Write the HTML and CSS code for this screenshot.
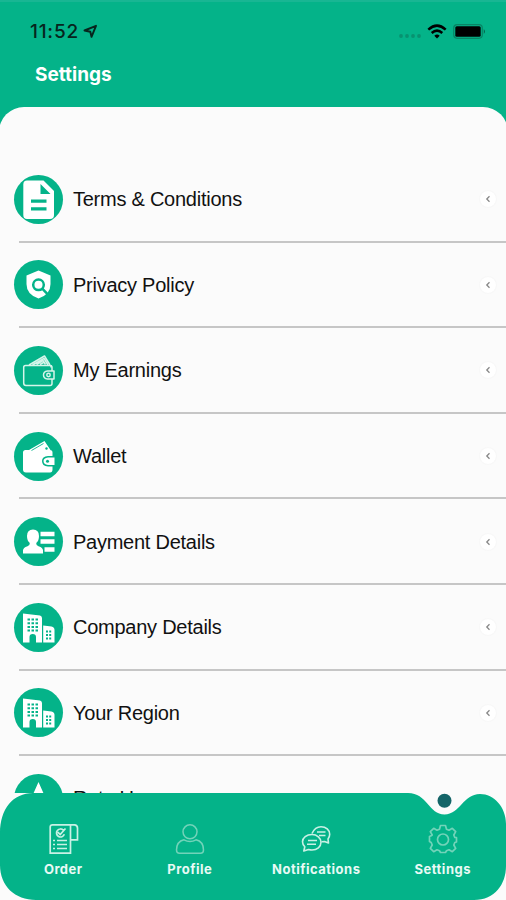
FILE: index.html
```html
<!DOCTYPE html>
<html lang="en">
<head>
    <meta charset="UTF-8">
    <meta name="viewport" content="width=device-width, initial-scale=1.0">
    <title>Settings</title>
    <link rel="stylesheet" href="styles.css">
</head>
<body>
    <!-- shared icons -->
    <svg class="defs" width="0" height="0">
        <symbol id="buildings" viewBox="0 0 49 49">
            <path fill="#fff" d="M9 10.500L26 12.500Q28 13 28 15V39.500H22V34Q22 31 18.700 31Q15.500 31 15.500 34V39.500H9Z"/>
            <path fill="#fff" d="M29.200 22.500L37.500 23.500Q40.500 24 40.500 27V39.500H29.200Z"/>
            <path stroke="#04b389" stroke-width="2" stroke-dasharray="2.500 1.500" d="M13.500 16.500H24M13.500 20.200H24M13.500 23.900H24M13.500 27.600H24"/>
            <path stroke="#04b389" stroke-width="1.800" stroke-dasharray="2 1.200" d="M32 28.500H37.500M32 32H37.500M32 35.500H37.500"/>
        </symbol>
    </svg>

    <div class="screen">
        <header class="header">
            <div class="status-bar">
                <span class="time">11:52</span>
                <svg class="location" width="15" height="15" viewBox="0 0 15 15">
                    <path d="M1.500 6.500L13 1.800L8.500 12.800L7.300 7.800Z" fill="none" stroke="#07251d" stroke-width="1.900" stroke-linejoin="round"/>
                </svg>
                <svg class="signal" width="24" height="6" viewBox="0 0 24 6" fill="#089270">
                    <circle cx="3" cy="3" r="1.900"/><circle cx="9" cy="3" r="1.900"/><circle cx="15" cy="3" r="1.900"/><circle cx="21" cy="3" r="1.900"/>
                </svg>
                <svg class="wifi" width="20" height="15" viewBox="0 0 20 15" fill="none" stroke="#000" stroke-width="2.500">
                    <path d="M1.300 5.600Q10 -2.400 18.700 5.600M4.700 9Q10 4.300 15.300 9"/>
                    <path d="M10 14.500L7.300 11.700Q10 9.300 12.700 11.700Z" fill="#000" stroke="none"/>
                </svg>
                <svg class="battery" width="33" height="15" viewBox="0 0 33 15">
                    <rect x="0.700" y="0.700" width="28.600" height="13.600" rx="3.500" fill="none" stroke="#088565" stroke-width="1.200"/>
                    <rect x="2.300" y="2.300" width="25.400" height="10.400" rx="1.500"/>
                    <path d="M30.800 5Q33 7.500 30.800 10Z" fill="#075f4a"/>
                </svg>
            </div>
            <h1>Settings</h1>
        </header>

        <main class="panel">
            <ul class="menu">
                <li class="menu-item">
                    <span class="icon">
                        <svg viewBox="0 0 49 49">
                            <path fill="#fff" d="M13 5.500H29.500L40 16V40Q40 44 36 44H13Q9.300 44 9.300 40V9.500Q9.300 5.500 13 5.500Z"/>
                            <path fill="#04b389" d="M26.500 9L36.500 19H26.500ZM17 24.500H32.500V27.700H17ZM17 32.200H32.500V35.500H17Z"/>
                        </svg>
                    </span>
                    <span class="label">Terms &amp; Conditions</span>
                    <span class="arrow"><svg viewBox="0 0 6 8"><path d="M4.500 1.300L1.800 4L4.500 6.700"/></svg></span>
                </li>
                <li class="menu-item">
                    <span class="icon">
                        <svg viewBox="0 0 49 49">
                            <path fill="#fff" d="M24.500 10.500L36.500 15.500V24Q36.500 34.500 24.500 38.500Q12.500 34.500 12.500 24V15.500Z"/>
                            <circle cx="24.500" cy="24.800" r="5.300" fill="none" stroke="#04b389" stroke-width="2.500"/>
                            <path d="M28.300 28.600L34 34.600" stroke="#04b389" stroke-width="2.500"/>
                        </svg>
                    </span>
                    <span class="label">Privacy Policy</span>
                    <span class="arrow"><svg viewBox="0 0 6 8"><path d="M4.500 1.300L1.800 4L4.500 6.700"/></svg></span>
                </li>
                <li class="menu-item">
                    <span class="icon">
                        <svg viewBox="0 0 49 49" fill="none" stroke="#d5f5ea" stroke-width="1.500" stroke-linejoin="round">
                            <path d="M38 25V21.500Q38 19.500 36 19.500H11.500Q9.700 19.500 9.700 21.500V37Q9.700 39.500 12 39.500H36Q38 39.500 38 37.500V33"/>
                            <path d="M40 25H33.500Q29.500 25.500 29.500 29Q29.500 32.500 33.500 33H40ZM37 21.500V19"/>
                            <circle cx="34.500" cy="29" r="1.700"/>
                            <path d="M15 19L30.500 10L36 19M18.500 19L30 12.500L34 19M22.500 18.500L29 14.500L31.500 18.500M26 18.500L29.500 16.500"/>
                        </svg>
                    </span>
                    <span class="label">My Earnings</span>
                    <span class="arrow"><svg viewBox="0 0 6 8"><path d="M4.500 1.300L1.800 4L4.500 6.700"/></svg></span>
                </li>
                <li class="menu-item">
                    <span class="icon">
                        <svg viewBox="0 0 49 49" fill="#fff">
                            <path d="M11.500 18H36Q38.500 18 38.500 20.500V24H34Q28 24.500 28 29Q28 34 34 34.500H38.500V37.500Q38.500 40.500 36 40.500H12Q9 40.500 9 37.500V20.500Q9 18 11.500 18Z"/>
                            <path d="M15 18L30.500 9L36.500 18ZM34 25.500H40.500V33H34Q29.500 32.500 29.500 29Q29.500 26 34 25.500Z"/>
                            <g fill="#04b389"><circle cx="33.500" cy="29.200" r="1.500"/><circle cx="32.500" cy="16.500" r="1.200"/></g>
                            <path d="M17.500 18.500L29.500 11.500" stroke="#04b389" stroke-width="0.900"/>
                        </svg>
                    </span>
                    <span class="label">Wallet</span>
                    <span class="arrow"><svg viewBox="0 0 6 8"><path d="M4.500 1.300L1.800 4L4.500 6.700"/></svg></span>
                </li>
                <li class="menu-item">
                    <span class="icon">
                        <svg viewBox="0 0 49 49" fill="#fff">
                            <path d="M19 12.500Q25 12.500 25 19Q25 24 22.200 26Q22 28.500 24.500 29.200Q29 30.500 29 33.500V36.500H9V33.500Q9 30.500 13.500 29.200Q16 28.500 15.800 26Q13 24 13 19Q13 12.500 19 12.500Z"/>
                            <path d="M26.500 14.800H40.500V19.200H26.500ZM26.500 22.300H40.500V26.700H26.500ZM30.500 30.300H40.500V34.700H30.500Z"/>
                        </svg>
                    </span>
                    <span class="label">Payment Details</span>
                    <span class="arrow"><svg viewBox="0 0 6 8"><path d="M4.500 1.300L1.800 4L4.500 6.700"/></svg></span>
                </li>
                <li class="menu-item">
                    <span class="icon"><svg><use href="#buildings"/></svg></span>
                    <span class="label">Company Details</span>
                    <span class="arrow"><svg viewBox="0 0 6 8"><path d="M4.500 1.300L1.800 4L4.500 6.700"/></svg></span>
                </li>
                <li class="menu-item">
                    <span class="icon"><svg><use href="#buildings"/></svg></span>
                    <span class="label">Your Region</span>
                    <span class="arrow"><svg viewBox="0 0 6 8"><path d="M4.500 1.300L1.800 4L4.500 6.700"/></svg></span>
                </li>
                <li class="menu-item">
                    <span class="icon">
                        <svg viewBox="0 0 49 49"><path fill="#fff" d="M24.500 8L29.500 19.200L41 20.200L31.800 28L35 40L24.500 33.300L14 40L17.200 28L8 20.200L19.500 19.200Z"/></svg>
                    </span>
                    <span class="label">Rate Us</span>
                </li>
            </ul>
        </main>

        <nav class="tab-bar">
            <svg class="tab-shape" viewBox="0 0 506 107">
                <path fill="#04b389" d="M33 0H408C427 0 429 21.500 444.500 21.500C460 21.500 463 1 480 1C494 1 506 14 506 31V73C506 91 495 107 474 107H36C15 107 0 93 0 72V40C0 16 13 0 33 0Z"/>
                <circle cx="444.500" cy="7.800" r="7" fill="#146568"/>
            </svg>
            <a class="tab">
                <svg viewBox="0 0 32 32" fill="none" stroke="#c9f1e5" stroke-width="1.700">
                    <path d="M23.500 1.800H5.500Q3.200 1.800 3.200 4V30.200H23.500V1.800H27.500Q30.500 2 30.500 5V16.800H23.500"/>
                    <path d="M6 17.500H8M10 17.500H20M6 21.500H8M10 21.500H20M6 25.500H8M10 25.500H20"/>
                    <path d="M16.500 7.300A4 4 0 1 0 17.300 11.300M10.800 9.200L13.200 11.600L18.500 5.500"/>
                </svg>
                <span>Order</span>
            </a>
            <a class="tab">
                <svg viewBox="0 0 32 32" fill="none" stroke="#72d3b9" stroke-width="1.500">
                    <circle cx="16" cy="8.800" r="7"/>
                    <path d="M10 16.800Q16 20 22 16.800Q29.500 18.500 29.500 27Q29.500 30.300 26.500 30.300H5.500Q2.500 30.300 2.500 27Q2.500 18.500 10 16.800Z"/>
                </svg>
                <span>Profile</span>
            </a>
            <a class="tab">
                <svg viewBox="0 0 32 32" fill="none" stroke="#c9f1e5" stroke-width="1.600" stroke-linejoin="round">
                    <path d="M12 10.500C14 6 17 3.700 21 3.700C26 3.700 29.700 7 29.700 11.300Q29.700 14 28 16L28.500 20L24.500 18.500L21.500 18.800"/>
                    <path d="M12 11.500C17 11.500 21 15 21 19.300C21 23.700 17 27 12 27Q10.500 27 8.500 26.500L3.800 28L4.800 23.800Q2.500 21.500 2.500 18.800C2.500 14.500 6.500 11.500 12 11.500Z"/>
                    <path d="M8 17.500H17M7 21.300H16M17 9H25.500M19 12.500H25.500"/>
                </svg>
                <span>Notifications</span>
            </a>
            <a class="tab active">
                <svg viewBox="0 0 32 32" fill="none" stroke="#72d3b9" stroke-width="1.700" stroke-linejoin="round">
                    <path d="M13.500 2.500H18.500L19.500 6.200L22 7.200L25.300 5.300L28.700 8.700L26.800 12L27.800 14.500H29.500V19L27.800 19.500L26.800 22L28.700 25.300L25.300 28.700L22 26.800L19.500 27.800L18.500 29.500H13.500L12.500 27.800L10 26.800L6.700 28.700L3.300 25.300L5.200 22L4.200 19.500L2.500 18.500V13.500L4.200 12.800L5.200 12L3.300 8.700L6.700 5.300L10 7.200L12.500 6.200Z"/>
                    <circle cx="16" cy="16.500" r="5.500"/>
                </svg>
                <span>Settings</span>
            </a>
        </nav>
    </div>
</body>
</html>
```

FILE: styles.css
```css
* {
    box-sizing: border-box;
}

body {
    margin: 0;
    background: #04b389;
    font-family: "Liberation Sans", Arial, sans-serif;
}

.defs {
    display: block;
}

.screen {
    position: relative;
    height: 900px;
    overflow: hidden;
    display: flex;
    flex-direction: column;
}

.header {
    height: 107px;
    flex-shrink: 0;
    border-top: 2px solid #18b693;
}

.status-bar {
    display: flex;
    align-items: center;
    height: 56px;
    padding: 2px 20px 0 30px;
}

.time {
    width: 50px;
    font-family: Inter, sans-serif;
    font-size: 19px;
    font-weight: 500;
    letter-spacing: 0.8px;
    color: #07251d;
    white-space: nowrap;
}

.location {
    margin-left: 3px;
}

.signal {
    margin: 10px 5px 0 auto;
}

.battery {
    margin-left: 6px;
}

h1 {
    margin: 5px 0 0 35px;
    font-family: Inter, sans-serif;
    font-size: 19px;
    line-height: 23px;
    font-weight: 700;
    color: #fff;
}

.panel {
    flex: 1;
    min-height: 0;
    overflow: hidden;
    margin: 0 -1.500px;
    padding: 50px 1.500px 0;
    background: #fbfbfb;
    border-radius: 25px 25px 0 0;
}

.menu {
    list-style: none;
    margin: 0;
    padding: 0;
}

.menu-item {
    display: flex;
    align-items: center;
    height: 85.600px;
    padding: 0 10px 1px 14px;
    background: linear-gradient(#c6c6c6, #c6c6c6) 19px 100% / 100% 2px no-repeat;
}

.icon {
    width: 49px;
    height: 49px;
    border-radius: 50%;
    background: #04b389;
    overflow: hidden;
}

.icon svg {
    display: block;
    width: 49px;
    height: 49px;
}

.label {
    margin-left: 10px;
    padding-top: 1px;
    font-size: 20px;
    letter-spacing: -0.250px;
    color: #111;
}

.arrow {
    display: flex;
    align-items: center;
    justify-content: center;
    width: 16px;
    height: 16px;
    margin-left: auto;
    border-radius: 50%;
    background: #fff;
    box-shadow: 0 0 2px #eee;
}

.arrow svg {
    width: 6px;
    height: 8px;
    fill: none;
    stroke: #888;
    stroke-width: 1.300;
}

/* bottom bar, stays above the list */
.tab-bar {
    position: absolute;
    left: 0;
    right: 0;
    bottom: 0;
    height: 107px;
    display: grid;
    grid-template-columns: repeat(4, 1fr);
    background: #fbfbfb;
}

.tab-shape {
    position: absolute;
    left: 0;
    top: 0;
    width: 100%;
    height: 107px;
}

.tab {
    position: relative;
    display: flex;
    flex-direction: column;
    align-items: center;
    padding-top: 30px;
    color: #e9faf5;
    font-family: Inter, sans-serif;
    font-size: 13px;
    line-height: 16px;
    font-weight: 700;
    letter-spacing: 0.500px;
}

.tab svg {
    width: 32px;
    height: 32px;
    margin-bottom: 6px;
}
```
